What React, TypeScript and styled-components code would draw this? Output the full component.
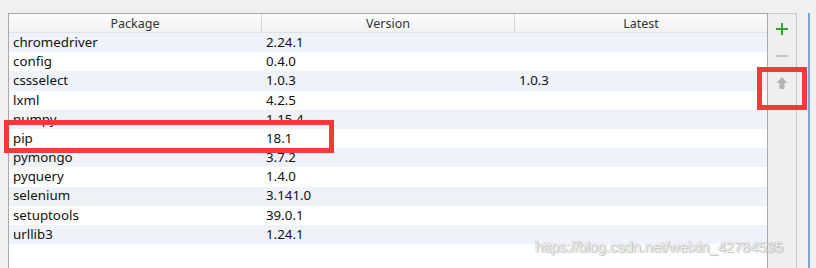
import React from 'react'
import styled, { createGlobalStyle } from 'styled-components'

const PACKAGES = [
    { name: 'chromedriver', version: '2.24.1', latest: '' },
    { name: 'config', version: '0.4.0', latest: '' },
    { name: 'cssselect', version: '1.0.3', latest: '1.0.3' },
    { name: 'lxml', version: '4.2.5', latest: '' },
    { name: 'numpy', version: '1.15.4', latest: '' },
    { name: 'pip', version: '18.1', latest: '' },
    { name: 'pymongo', version: '3.7.2', latest: '' },
    { name: 'pyquery', version: '1.4.0', latest: '' },
    { name: 'selenium', version: '3.141.0', latest: '' },
    { name: 'setuptools', version: '39.0.1', latest: '' },
    { name: 'urllib3', version: '1.24.1', latest: '' },
]

const COLUMNS = ['Package', 'Version', 'Latest']

const GlobalStyle = createGlobalStyle`
    html, body {
        margin: 0;
        padding: 0;
        background: #f0f0f0;
        overflow: hidden;
    }
`

const App: React.FC = () => {
    return (
        <Page>
            <GlobalStyle />
            <Table>
                <Header>
                    {COLUMNS.map(col => <HeaderCell key={col}>{col}</HeaderCell>)}
                </Header>
                {PACKAGES.map(({ name, version, latest }, i) => (
                    <Row key={name} shaded={i % 2 === 0}>
                        <Cell>{name}</Cell>
                        <Cell>{version}</Cell>
                        <Cell>{latest}</Cell>
                    </Row>
                ))}
            </Table>
            <Toolbar>
                <ToolButton>
                    <svg width="14" height="14" viewBox="0 0 14 14">
                        <path d="M7 1v12M1 7h12" stroke="#2ea52e" strokeWidth="2" />
                    </svg>
                </ToolButton>
                <ToolButton>
                    <svg width="14" height="14" viewBox="0 0 14 14">
                        <path d="M1 7h12" stroke="#c4c4c4" strokeWidth="2" />
                    </svg>
                </ToolButton>
                <ToolButton>
                    <svg width="14" height="14" viewBox="0 0 14 14">
                        <path d="M7 1L1.5 7H4.5V13H9.5V7H12.5Z" fill="#b4b4b4" />
                    </svg>
                </ToolButton>
            </Toolbar>
            <Gutter />
            <Highlight style={{ left: 4, top: 120, width: 330, height: 33 }} />
            <Highlight style={{ left: 757, top: 67, width: 50, height: 43 }} />
            <Watermark>https://blog.csdn.net/weixin_42784535</Watermark>
        </Page>
    )
}

export default App

const Page = styled.div`
    position: relative;
    display: flex;
    align-items: stretch;
    width: 816px;
    height: 268px;
    padding: 13px 0 0 8px;
    box-sizing: border-box;
    overflow: hidden;
    background: #f0f0f0;
    font-family: "Noto Sans", "Open Sans", sans-serif;
    font-size: 13.3px;
    color: #111;
`

const Table = styled.div`
    width: 760px;
    box-sizing: border-box;
    border: 1px solid #a9a9a9;
    border-bottom: none;
    background: #fff;
    display: flex;
    flex-direction: column;
`

const Header = styled.div`
    display: grid;
    grid-template-columns: 253px 253px 1fr;
    height: 18px;
    background: linear-gradient(#fcfcfc, #f1f1f1);
    border-bottom: 1px solid #e2e2e2;
`

const HeaderCell = styled.div`
    display: flex;
    align-items: center;
    justify-content: center;
    color: #333;
    font-size: 12.5px;
    border-right: 1px solid #d6d6d6;

    &:last-child {
        border-right: none;
    }
`

const Row = styled.div<{ shaded: boolean }>`
    display: grid;
    grid-template-columns: 253px 253px 1fr;
    height: 19.2px;
    background: ${({ shaded }) => shaded ? '#eff3f9' : '#ffffff'};
`

const Cell = styled.div`
    display: flex;
    align-items: center;
    padding-left: 4px;
    white-space: nowrap;
    overflow: hidden;
    line-height: 1;
`

const Toolbar = styled.div`
    width: 29px;
    box-sizing: border-box;
    border: 1px solid #c8c8c8;
    border-left: none;
    border-bottom: none;
    background: #efefef;
    display: flex;
    flex-direction: column;
    align-items: center;
    padding-top: 7px;
    gap: 12px;
`

const ToolButton = styled.div`
    width: 16px;
    height: 15px;
    display: flex;
    align-items: center;
    justify-content: center;
`

const Gutter = styled.div`
    width: 11px;
    border-right: 2px solid #7aa6d6;
`

const Highlight = styled.div`
    position: absolute;
    box-sizing: border-box;
    border: 5px solid #f23a3a;
    pointer-events: none;
`

const Watermark = styled.div`
    position: absolute;
    left: 535px;
    top: 238px;
    font-family: "Liberation Sans", Arial, sans-serif;
    font-size: 15px;
    color: rgba(255, 255, 255, 0.9);
    text-shadow: 0 0 1px rgba(90, 90, 90, 0.7), 1px 1px 1px rgba(120, 120, 120, 0.4);
    letter-spacing: -0.2px;
    white-space: nowrap;
`
